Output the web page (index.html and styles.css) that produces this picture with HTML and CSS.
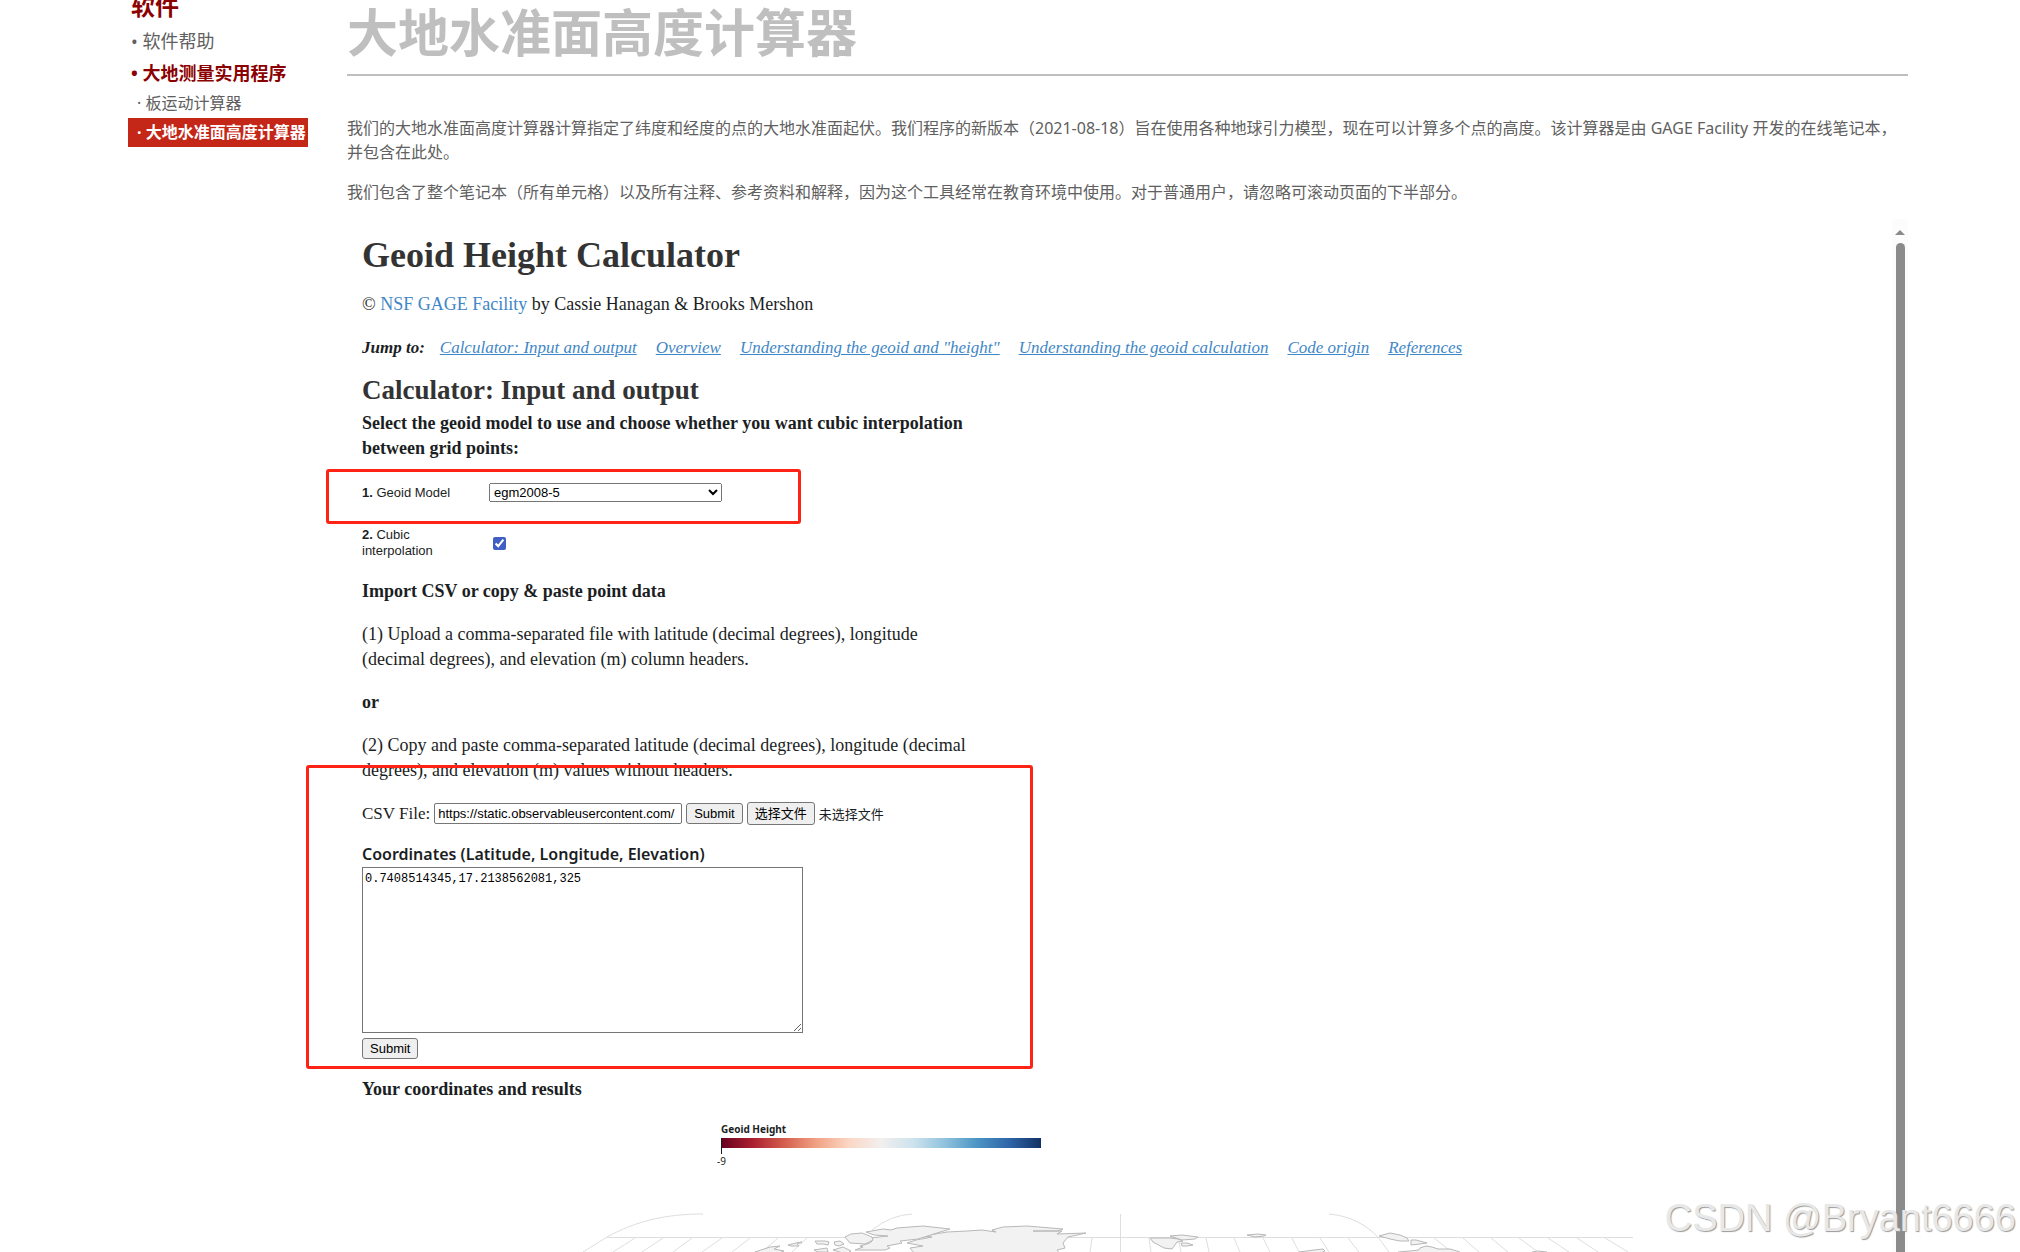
FILE: index.html
```
<!DOCTYPE html>
<html lang="zh-CN">
<head>
    <meta charset="UTF-8">
    <meta name="viewport" content="width=device-width, initial-scale=1.0">
    <title>大地水准面高度计算器</title>
    <link rel="stylesheet" href="styles.css">
</head>
<body>
    <div class="page">
        <nav class="sidebar">
            <h3>软件</h3>
            <a href="#">• 软件帮助</a>
            <a href="#" class="current">• 大地测量实用程序</a>
            <a href="#" class="sub">· 板运动计算器</a>
            <a href="#" class="sub active">· 大地水准面高度计算器</a>
        </nav>

        <main class="main">
            <h1 class="page-title">大地水准面高度计算器</h1>
            <div class="intro">
                <p>我们的大地水准面高度计算器计算指定了纬度和经度的点的大地水准面起伏。我们程序的新版本（2021-08-18）旨在使用各种地球引力模型，现在可以计算多个点的高度。该计算器是由 GAGE Facility 开发的在线笔记本，并包含在此处。</p>
                <p>我们包含了整个笔记本（所有单元格）以及所有注释、参考资料和解释，因为这个工具经常在教育环境中使用。对于普通用户，请忽略可滚动页面的下半部分。</p>
            </div>

            <section class="frame">
                <div class="notebook">
                    <h1>Geoid Height Calculator</h1>
                    <p class="byline">© <a href="#">NSF GAGE Facility</a> by Cassie Hanagan &amp; Brooks Mershon</p>
                    <p class="jump">
                        <b>Jump to:</b>
                        <a href="#calculator">Calculator: Input and output</a>
                        <a href="#">Overview</a>
                        <a href="#">Understanding the geoid and "height"</a>
                        <a href="#">Understanding the geoid calculation</a>
                        <a href="#">Code origin</a>
                        <a href="#">References</a>
                    </p>

                    <h2 id="calculator">Calculator: Input and output</h2>
                    <p class="lead">Select the geoid model to use and choose whether you want cubic interpolation between grid points:</p>

                    <form class="options">
                        <label for="model"><b>1.</b> Geoid Model</label>
                        <select id="model" name="model">
                            <option>egm2008-5</option>
                        </select>
                        <label for="cubic"><b>2.</b> Cubic interpolation</label>
                        <input type="checkbox" id="cubic" name="cubic" checked>
                    </form>

                    <p class="text"><b>Import CSV or copy &amp; paste point data</b></p>
                    <p class="text">(1) Upload a comma-separated file with latitude (decimal degrees), longitude (decimal degrees), and elevation (m) column headers.</p>
                    <p class="text"><b>or</b></p>
                    <p class="text">(2) Copy and paste comma-separated latitude (decimal degrees), longitude (decimal degrees), and elevation (m) values without headers.</p>

                    <form class="csv">
                        <label for="csvUrl">CSV File:</label>
                        <input type="text" id="csvUrl" name="csvUrl" value="https://static.observableusercontent.com/">
                        <button type="button">Submit</button>
                        <input type="file" id="csvFile" name="csvFile" class="file-input">
                        <label for="csvFile" class="file-button">选择文件</label>
                        <span class="file-name">未选择文件</span>
                    </form>

                    <form class="coords">
                        <label for="coords">Coordinates (Latitude, Longitude, Elevation)</label>
                        <textarea id="coords" name="coords">0.7408514345,17.2138562081,325</textarea>
                        <button type="button">Submit</button>
                    </form>

                    <p class="text"><b>Your coordinates and results</b></p>

                    <div class="legend">
                        <b>Geoid Height</b>
                        <div class="ramp"></div>
                        <span class="tick">-9</span>
                    </div>

                    <svg class="map" width="1060" height="40" viewBox="0 0 1060 40">
                        <!-- graticule -->
                        <g fill="none" stroke="#dedede">
                            <path d="M7 40L31 25C60 9 90 2 127 2M296 18Q315 3 336 2M544.500 2V40M753 2C775 4 790 13 802 25L813 40M31 25.500H1057"/>
                            <path d="M59 26L37 40M87 26L66 40M116 26L97 40M146 26L126 40M174 26L156 40M202 26L186 40M231 26L216 40M516 26L514 40M573 26L575 40M602 26L605 40M630 26L633 40M658 26L664 40M687 26L694 40M716 26L723 40M744 26L753 40M772 26L783 40M858 26L876 40M887 26L903 40M915 26L932 40M943 26L962 40M972 26L993 40M1001 26L1022 40M1029 26L1052 40"/>
                        </g>
                        <!-- land -->
                        <g fill="#f2f2f2" stroke="#b8b8b8" stroke-linejoin="round">
                            <path d="M339 42L334 36L347 34L331 31L340 28L356 25L348 24L371 20L391 19L406 18L420 20L416 18L427 15L451 14L487 17L482 19L457 19L486 19L481 22L510 21L492 25L487 31L489 36L481 38L484 42Z"/>
                            <path d="M290 20L307 17L315 18L321 16L347 14L374 17L361 21L342 27L324 29L326 31L311 34L314 36L309 38L279 38L287 35L284 34L294 31L297 28L294 26L312 24L298 23Z"/>
                            <path d="M269 25L275 22L286 21L296 25L297 28L289 32L274 31Z"/>
                            <path d="M179 40L194 35L204 34L198 37L208 39L200 42ZM212 33L220 31L226 30L221 32L223 34L215 34ZM239 29L249 29L253 30L252 33L247 32L241 32ZM258 30L264 29L268 32L263 34L259 33ZM238 38L251 36L252 40L242 40ZM257 38L267 35L275 39L270 42Z"/>
                            <path d="M574 26L594 26L602 27L607 29L601 30L596 37L588 36L577 30ZM594 24L606 23L622 25L619 27L606 28ZM605 31L611 31L617 33L611 34L606 34ZM671 23L682 22L690 23L688 24L679 25ZM723 40L738 38L747 37L749 39L742 42Z"/>
                            <path d="M803 24L814 21L824 23L831 26L833 29L824 29L814 27ZM835 28L840 28L851 31L844 32L835 33ZM822 40L834 39L843 38L844 36L850 34L856 35L862 37L874 37L884 40L884 42H822ZM956 40L962 39L971 40V42H956Z"/>
                        </g>
                    </svg>

                    <div class="mark mark-model"></div>
                    <div class="mark mark-input"></div>
                </div>

                <div class="scrollbar">
                    <div class="arrow"></div>
                    <div class="thumb"></div>
                </div>
            </section>
        </main>
    </div>
    <div class="watermark">CSDN @Bryant6666</div>
</body>
</html>
```
FILE: styles.css
```
* {
    box-sizing: border-box;
}

body {
    margin: 0;
    height: 100vh;
    overflow: hidden;
    position: relative;
    background: #fff;
    color: #606060;
    font-family: "Noto Sans", "Noto Sans CJK SC", sans-serif;
    font-size: 16px;
    line-height: 24px;
}

p, h1, h2, h3 {
    margin: 0;
}

.page {
    display: flex;
    height: 100%;
    gap: 39px;
    padding: 0 112px 0 128px;
}

/* sidebar */
.sidebar {
    flex: 0 0 180px;
    display: flex;
    flex-direction: column;
}

.sidebar h3 {
    height: 25px;
    padding-left: 3px;
    color: #8b0000;
    font-size: 24px;
    line-height: 12px;
}

.sidebar a {
    padding-left: 3px;
    color: #606060;
    font-size: 18px;
    line-height: 32px;
    text-decoration: none;
    white-space: nowrap;
}

.sidebar .current {
    color: #8b0000;
    font-weight: bold;
}

.sidebar .sub {
    padding-left: 9px;
    font-size: 16px;
    line-height: 29px;
}

.sidebar .active {
    background: #c42618;
    color: #fff;
    font-weight: bold;
}

/* main column */
.main {
    flex: 1;
    min-width: 0;
    display: flex;
    flex-direction: column;
}

.page-title {
    height: 76px;
    border-bottom: 2px solid #bfbfbf;
    color: #bfbfbf;
    font-size: 51px;
    line-height: 64px;
}

.intro {
    display: flex;
    flex-direction: column;
    gap: 16px;
    padding: 40px 0 15px;
}

.frame {
    flex: 1;
    min-height: 0;
    display: flex;
}

/* notebook */
.notebook {
    flex: 1;
    position: relative;
    padding: 16px 0 0 15px;
    color: #1b1e23;
    font-family: "Liberation Serif", serif;
    font-size: 18px;
    line-height: 25px;
}

.notebook h1 {
    color: #333;
    font-size: 36px;
    line-height: 40px;
}

.notebook h2 {
    margin-top: 14px;
    color: #333;
    font-size: 27px;
    line-height: 32px;
}

.notebook a {
    color: #3f87c6;
    text-decoration: none;
}

.byline {
    margin-top: 17px;
}

.jump {
    display: flex;
    gap: 19px;
    margin-top: 18px;
    font-size: 17px;
    font-style: italic;
}

.notebook .jump a {
    text-decoration: underline;
}

.jump b {
    margin-right: -4px;
}

.lead {
    max-width: 640px;
    margin-top: 5px;
    font-weight: bold;
}

.options {
    display: grid;
    grid-template-columns: 100px 233px;
    column-gap: 27px;
    row-gap: 25px;
    align-items: center;
    margin: 22px 0 20px;
    font-family: "Liberation Sans", sans-serif;
    font-size: 13px;
    line-height: 16px;
}

.options select {
    height: 19px;
    font-family: inherit;
    font-size: 13px;
}

.options input {
    width: 13px;
    height: 13px;
    margin: 0 4px;
    accent-color: #3f5fc4;
}

.text {
    max-width: 615px;
    margin-top: 18px;
}

button, .file-button {
    height: 21px;
    padding: 1px 7px;
    border: 1px solid #767676;
    border-radius: 3px;
    background: #efefef;
    color: #000;
    font-family: "Liberation Sans", "Noto Sans CJK SC", sans-serif;
    font-size: 13px;
    line-height: 17px;
}

.csv {
    display: flex;
    align-items: center;
    gap: 4px;
    margin-top: 18px;
    font-size: 17px;
}

.csv input[type="text"] {
    width: 248px;
    height: 21px;
    padding: 1px 3px;
    border: 1px solid #767676;
    border-radius: 2px;
    font-family: "Liberation Sans", sans-serif;
    font-size: 13px;
}

/* native control is hidden, its label is the visible button */
.file-input {
    position: absolute;
    width: 1px;
    height: 1px;
    opacity: 0;
}

.csv .file-button {
    height: 23px;
    padding: 2px 7px;
}

.file-name {
    font-family: "Noto Sans CJK SC", sans-serif;
    font-size: 13px;
}

.coords {
    display: flex;
    flex-direction: column;
    align-items: flex-start;
    margin-top: 16px;
}

.coords label {
    font-family: "Noto Sans", sans-serif;
    font-size: 16px;
    font-weight: 600;
}

.coords textarea {
    width: 441px;
    height: 166px;
    margin-bottom: 5px;
    padding: 2px;
    border: 1px solid #767676;
    font-family: "Liberation Mono", monospace;
    font-size: 12px;
    line-height: 18px;
}

/* colour legend */
.legend {
    width: 320px;
    margin: 18px 0 0 359px;
    font-family: "Noto Sans", sans-serif;
    font-size: 10px;
    line-height: 18px;
}

.legend b {
    display: block;
}

.ramp {
    height: 10px;
    background: linear-gradient(to right, #67001f, #ac202f, #d56050, #f1a385, #fbd7c4, #f2efee, #cde3ee, #8fc2dd, #4b94c4, #2f65a8, #123264);
}

.ramp::before {
    content: "";
    display: block;
    width: 1px;
    height: 16px;
    background: #1b1e23;
}

.tick {
    display: block;
    margin-left: -4px;
    padding-top: 4px;
}

.map {
    display: block;
    margin: 42px 0 0 214px;
}

/* red highlight boxes */
.mark {
    position: absolute;
    border: 3px solid #ff2316;
    border-radius: 3px;
}

.mark-model {
    left: -21px;
    top: 250px;
    width: 475px;
    height: 55px;
}

.mark-input {
    left: -41px;
    top: 546px;
    width: 727px;
    height: 304px;
}

.scrollbar {
    flex: 0 0 16px;
    display: flex;
    flex-direction: column;
    align-items: center;
    gap: 8px;
    padding-top: 11px;
    background: #fcfcfc;
}

.arrow {
    border: 5px solid transparent;
    border-top: 0;
    border-bottom-color: #8b8b8b;
}

.thumb {
    flex: 1;
    width: 9px;
    border-radius: 5px 5px 0 0;
    background: #8b8b8b;
}

.watermark {
    position: absolute;
    right: 4px;
    bottom: 14px;
    color: #e8e8e8;
    font-family: "Liberation Sans", sans-serif;
    font-size: 38px;
    line-height: 40px;
    text-shadow: 1px 1px 1px #999;
}
```
